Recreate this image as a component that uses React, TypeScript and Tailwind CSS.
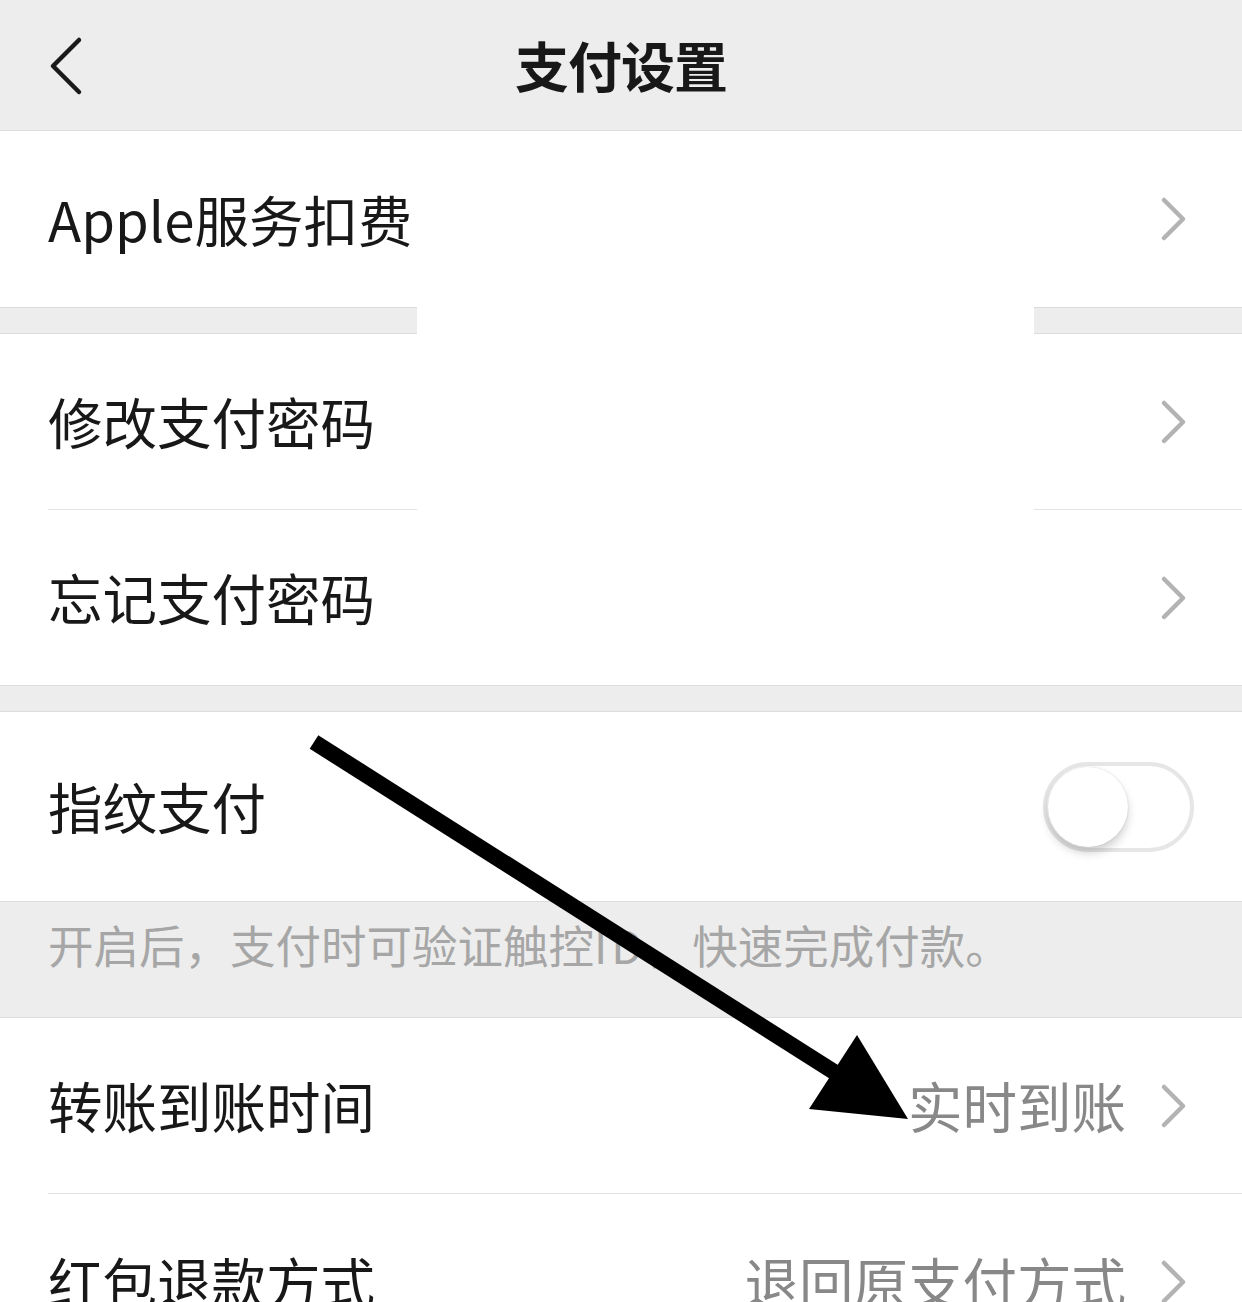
import type { ReactNode } from "react";

const font = { fontFamily: '"Noto Sans CJK SC", "Noto Sans", sans-serif' };

function Chevron() {
  return (
    <svg width="28" height="48" viewBox="0 0 28 48" className="shrink-0">
      <polyline points="4,5 23,24 4,43" fill="none" stroke="#b3b3b3" strokeWidth="4.5" strokeLinecap="round" strokeLinejoin="round" />
    </svg>
  );
}

function Row({ label, value, h, right }: { label: string; value?: string; h: string; right?: ReactNode }) {
  return (
    <div className={`flex items-center justify-between bg-white pl-[48px] pr-[54px] ${h}`}>
      <span className="text-[54.5px] leading-none text-[#181818]">{label}</span>
      {right ?? (
        <div className="flex items-center gap-[34px]">
          {value && <span className="text-[54.5px] leading-none text-[#888888]">{value}</span>}
          <Chevron />
        </div>
      )}
    </div>
  );
}

function Divider() {
  return (
    <div className="bg-white pl-[48px]">
      <div className="h-px bg-[#e3e3e3]" />
    </div>
  );
}

function Toggle() {
  return (
    <div className="relative -mr-[6px] h-[90px] w-[151px] rounded-full border-[4px] border-[#e6e6e6] bg-white">
      <div className="absolute left-[1px] top-[1px] h-[80px] w-[80px] rounded-full bg-white shadow-[0_6px_10px_rgba(0,0,0,0.18),0_0_2px_rgba(0,0,0,0.15)]" />
    </div>
  );
}

export default function App() {
  return (
    <div className="relative h-[1302px] w-[1242px] overflow-hidden bg-[#ededed]" style={font}>
      {/* nav bar */}
      <div className="relative flex h-[131px] items-center justify-center border-b border-[#dcdcdc] bg-[#ededed]">
        <svg width="40" height="60" viewBox="0 0 40 60" className="absolute left-[44px] top-[36px]">
          <polyline points="35,4 9,30 35,56" fill="none" stroke="#1a1a1a" strokeWidth="4.5" strokeLinecap="round" strokeLinejoin="round" />
        </svg>
        <span className="text-[54px] font-semibold leading-none tracking-[-1px] text-[#181818]">支付设置</span>
      </div>

      <div className="border-b border-[#dcdcdc]">
        <Row label="Apple服务扣费" h="h-[176px]" />
      </div>

      <div className="h-[25px]" />

      <div className="border-y border-[#dcdcdc]">
        <Row label="修改支付密码" h="h-[175px]" />
        <Divider />
        <Row label="忘记支付密码" h="h-[175px]" />
      </div>

      <div className="h-[25px]" />

      <div className="border-y border-[#dcdcdc]">
        <Row label="指纹支付" h="h-[189px]" right={<Toggle />} />
      </div>

      <div className="h-[115px] pl-[48px] pt-[14px]">
        <p className="text-[45.5px] leading-[56px] text-[#a6a6a6]">
          开启后，支付时可验证触控<span className="tracking-[4px]">ID</span>，快速完成付款。
        </p>
      </div>

      <div className="border-t border-[#dcdcdc]">
        <Row label="转账到账时间" value="实时到账" h="h-[175px]" />
        <Divider />
        <Row label="红包退款方式" value="退回原支付方式" h="h-[175px]" />
      </div>

      {/* blank patch over the middle of the first groups */}
      <div className="absolute left-[417px] top-[305px] h-[207px] w-[617px] bg-white" />

      {/* pointer arrow */}
      <svg className="pointer-events-none absolute inset-0" width="1242" height="1302" viewBox="0 0 1242 1302">
        <line x1="314" y1="742" x2="842" y2="1077" stroke="#000" strokeWidth="16" />
        <polygon points="857,1035 809,1109 908,1119" fill="#000" />
      </svg>
    </div>
  );
}
